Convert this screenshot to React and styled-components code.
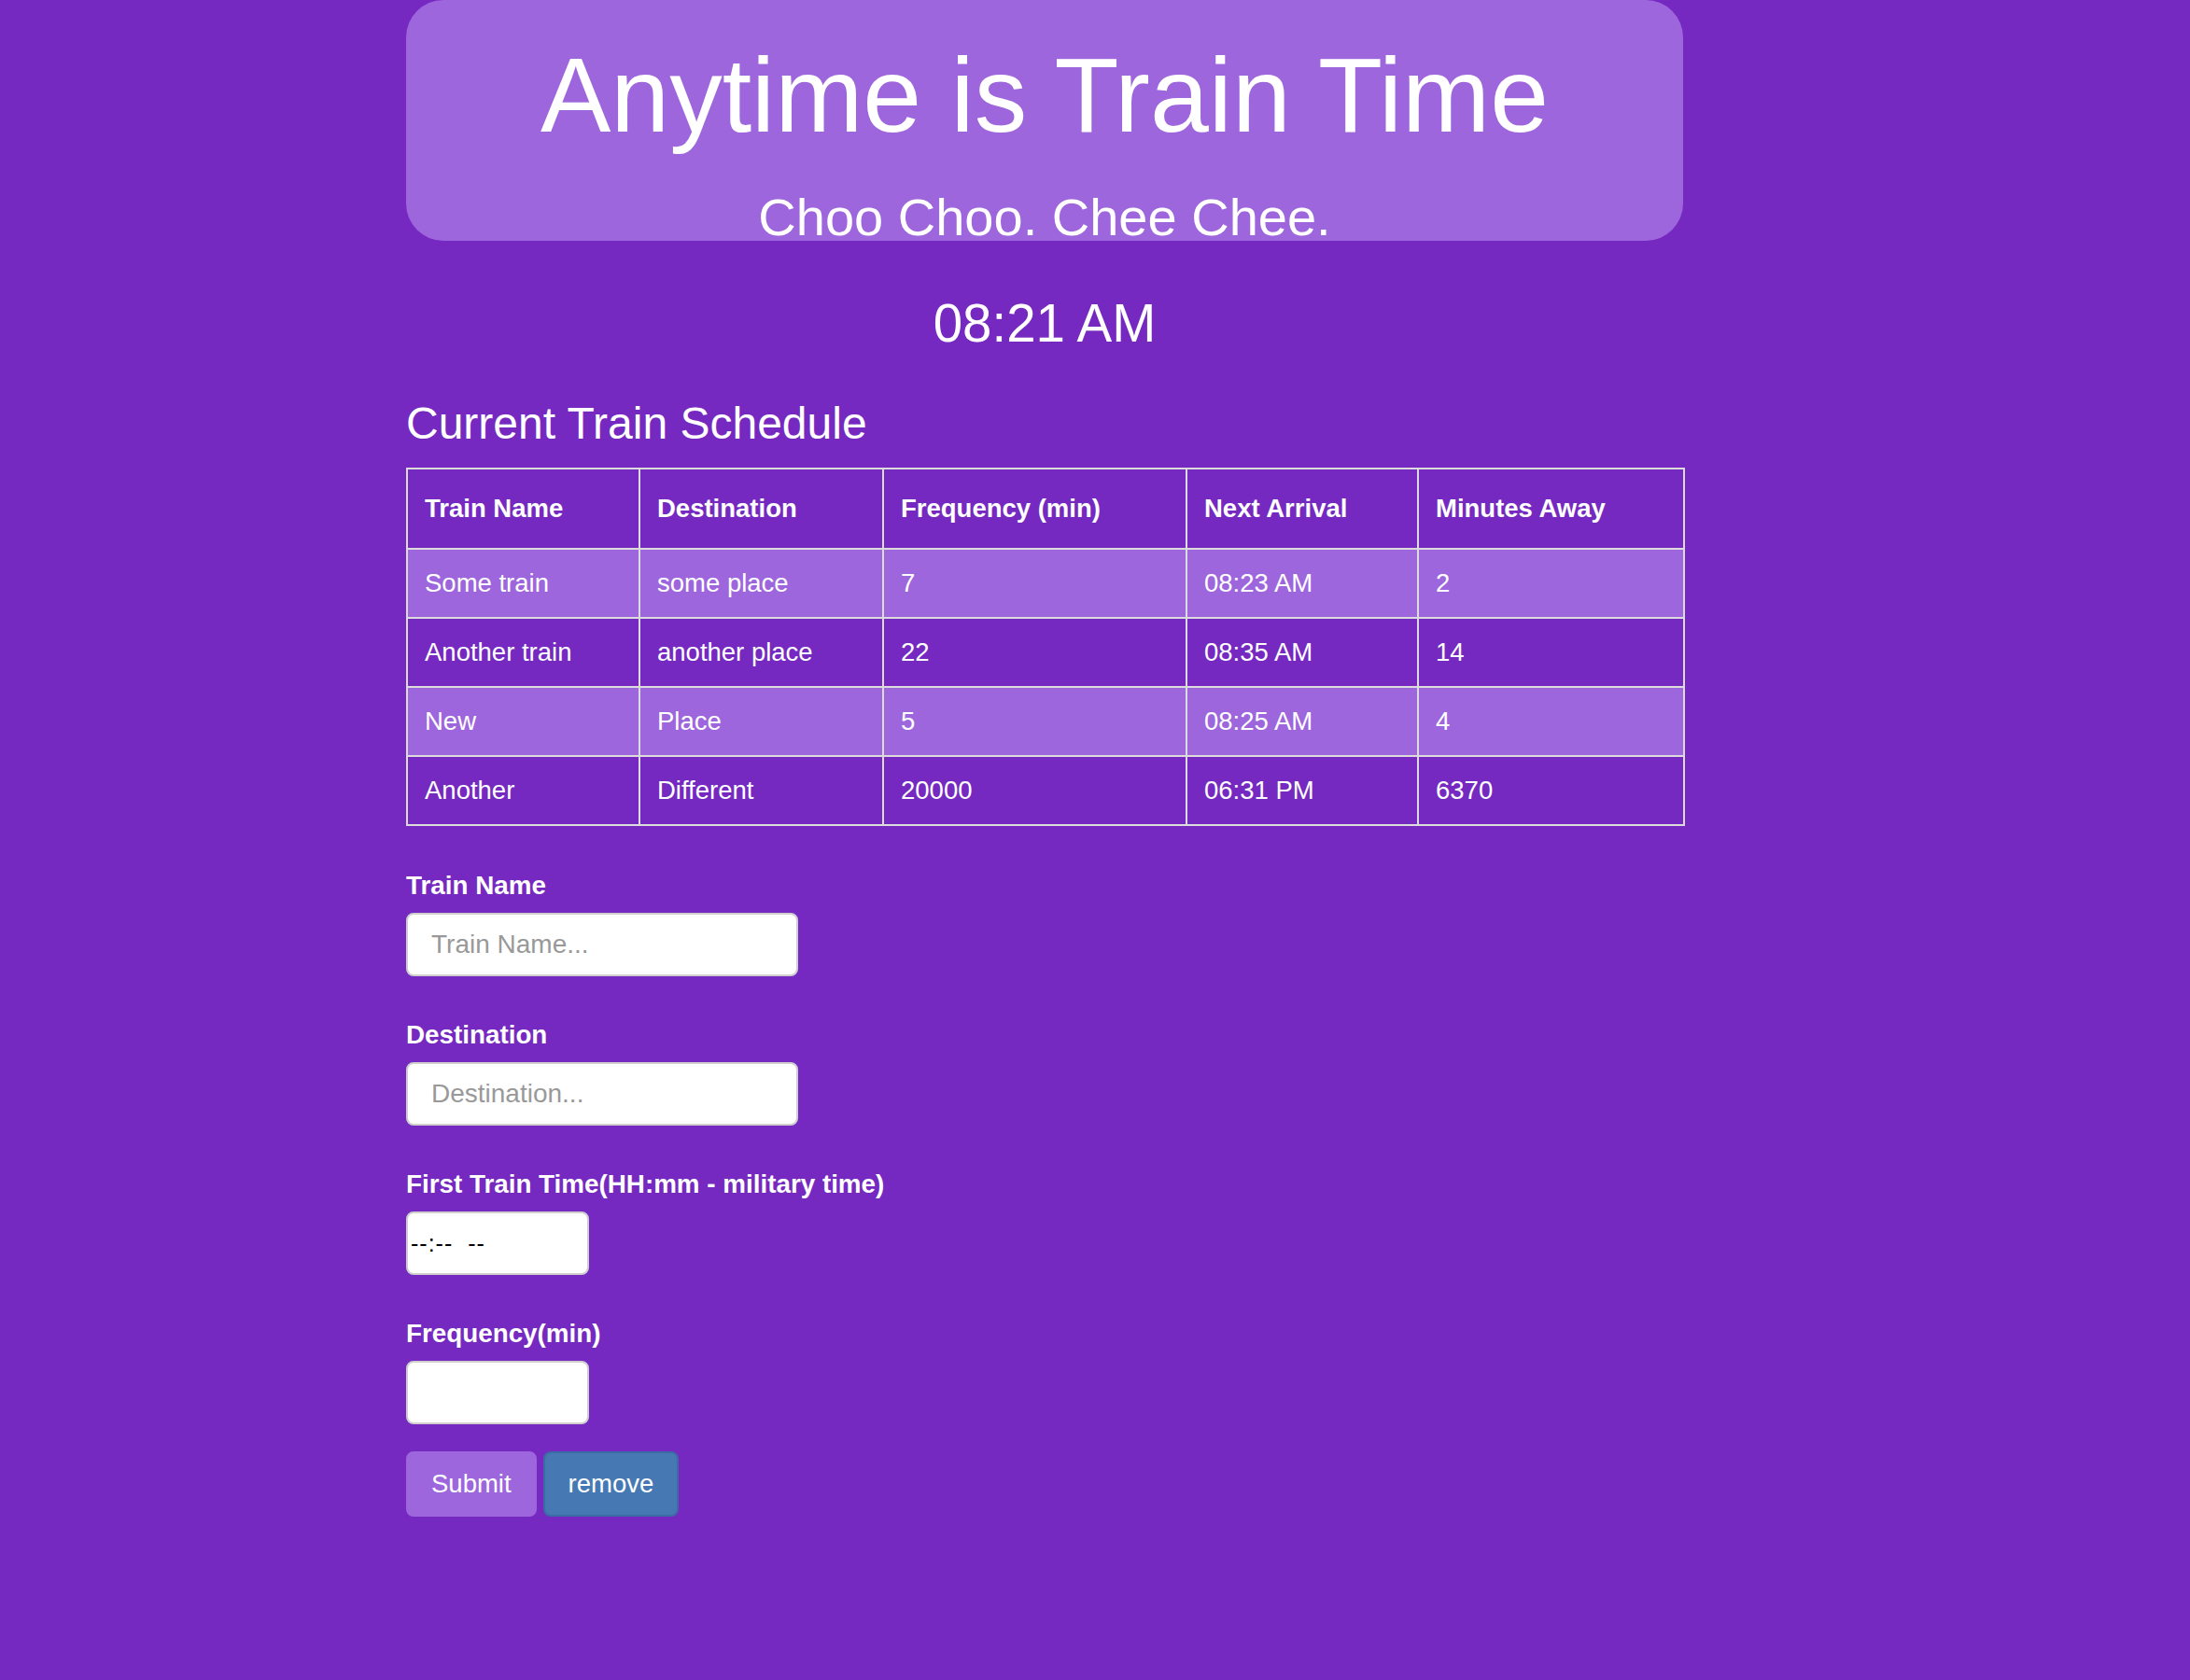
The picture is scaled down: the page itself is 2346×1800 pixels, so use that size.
import styled, { createGlobalStyle } from 'styled-components'

const GlobalStyle = createGlobalStyle`
    html, body {
        margin: 0;
        padding: 0;
        background: #7529c0;
        color: #fff;
        font-family: "Liberation Sans", Arial, Helvetica, sans-serif;
    }
`

const trains = [
    { name: 'Some train', destination: 'some place', frequency: '7', next: '08:23 AM', away: '2' },
    { name: 'Another train', destination: 'another place', frequency: '22', next: '08:35 AM', away: '14' },
    { name: 'New', destination: 'Place', frequency: '5', next: '08:25 AM', away: '4' },
    { name: 'Another', destination: 'Different', frequency: '20000', next: '06:31 PM', away: '6370' },
]

const columns = [
    { label: 'Train Name', width: 249 },
    { label: 'Destination', width: 261 },
    { label: 'Frequency (min)', width: 325 },
    { label: 'Next Arrival', width: 248 },
    { label: 'Minutes Away', width: 285 },
]

const App = () => {
    return (
        <>
            <GlobalStyle />
            <Page>
                <Jumbotron>
                    <Title>Anytime is Train Time</Title>
                    <Subtitle>Choo Choo. Chee Chee.</Subtitle>
                </Jumbotron>
                <Clock>08:21 AM</Clock>
                <SectionTitle>Current Train Schedule</SectionTitle>
                <Schedule>
                    <colgroup>
                        {columns.map((col) => (
                            <col key={col.label} style={{ width: col.width }} />
                        ))}
                    </colgroup>
                    <thead>
                        <tr>
                            {columns.map((col) => (
                                <HeadCell key={col.label}>{col.label}</HeadCell>
                            ))}
                        </tr>
                    </thead>
                    <tbody>
                        {trains.map((train, i) => (
                            <Row key={train.name + i} $striped={i % 2 === 0}>
                                <Cell>{train.name}</Cell>
                                <Cell>{train.destination}</Cell>
                                <Cell>{train.frequency}</Cell>
                                <Cell>{train.next}</Cell>
                                <Cell>{train.away}</Cell>
                            </Row>
                        ))}
                    </tbody>
                </Schedule>
                <Form onSubmit={(e) => e.preventDefault()}>
                    <Field>
                        <Label>Train Name</Label>
                        <Input type="text" placeholder="Train Name..." />
                    </Field>
                    <Field>
                        <Label>Destination</Label>
                        <Input type="text" placeholder="Destination..." />
                    </Field>
                    <Field>
                        <Label>First Train Time(HH:mm - military time)</Label>
                        <Input type="text" placeholder="--:-- --" $narrow $time />
                    </Field>
                    <Field>
                        <Label>Frequency(min)</Label>
                        <Input type="text" $narrow />
                    </Field>
                    <Buttons>
                        <Button type="submit">Submit</Button>
                        <Button type="button" $variant="remove">remove</Button>
                    </Buttons>
                </Form>
            </Page>
        </>
    )
}

const Page = styled.div`
    width: 1368px;
    margin-left: 435px;
    padding-bottom: 170px;
`
const Jumbotron = styled.header`
    height: 258px;
    box-sizing: border-box;
    padding-top: 46px;
    background: #9e66dc;
    border-radius: 40px;
    text-align: center;
`
const Title = styled.h1`
    margin: 0;
    font-size: 113px;
    line-height: 113px;
    font-weight: 400;
`
const Subtitle = styled.p`
    margin: 46px 0 0;
    font-size: 56px;
    line-height: 56px;
`
const Clock = styled.div`
    margin-top: 61px;
    font-size: 56.5px;
    line-height: 56px;
    text-align: center;
`
const SectionTitle = styled.h2`
    margin: 55px 0 0;
    font-size: 48px;
    line-height: 48px;
    font-weight: 400;
`
const Schedule = styled.table`
    margin-top: 23px;
    width: 100%;
    table-layout: fixed;
    border-collapse: collapse;
    border: 2px solid #dcdcdc;
    font-size: 27.5px;
`
const HeadCell = styled.th`
    height: 86px;
    padding: 0 18px;
    text-align: left;
    font-weight: 700;
    border: 2px solid #dcdcdc;
    box-sizing: border-box;
`
const Row = styled.tr`
    background: ${(p) => (p.$striped ? '#9e66dc' : 'transparent')};
`
const Cell = styled.td`
    height: 74px;
    padding: 0 18px;
    border: 2px solid #dcdcdc;
    box-sizing: border-box;
    white-space: nowrap;
`
const Form = styled.form`
    margin-top: 50px;
    display: flex;
    flex-direction: column;
    align-items: flex-start;
`
const Field = styled.div`
    display: flex;
    flex-direction: column;
    align-items: flex-start;
    margin-bottom: 49px;
    &:nth-last-child(2) {
        margin-bottom: 29px;
    }
`
const Label = styled.label`
    font-size: 27.8px;
    line-height: 27px;
    font-weight: 700;
    margin-bottom: 16px;
`
const Input = styled.input`
    box-sizing: border-box;
    width: ${(p) => (p.$narrow ? '196px' : '420px')};
    height: 68px;
    margin: 0;
    padding: ${(p) => (p.$time ? '0 3px' : '0 25px')};
    background: #fff;
    border: 2px solid #cfcfcf;
    border-radius: 8px;
    font-family: "Liberation Sans", Arial, sans-serif;
    font-size: ${(p) => (p.$time ? '25px' : '28px')};
    color: #000;
    outline: none;
    &::placeholder {
        color: ${(p) => (p.$time ? '#000' : '#999')};
        letter-spacing: ${(p) => (p.$time ? '1px' : 'normal')};
        word-spacing: ${(p) => (p.$time ? '8px' : 'normal')};
    }
`
const Buttons = styled.div`
    display: flex;
    gap: 7px;
`
const Button = styled.button`
    box-sizing: border-box;
    height: 70px;
    padding: 0 25px;
    border-radius: 8px;
    border: 2px solid ${(p) => (p.$variant === 'remove' ? '#3c6aa5' : '#9e66dc')};
    background: ${(p) => (p.$variant === 'remove' ? '#4679b3' : '#9e66dc')};
    color: #fff;
    font-family: "Liberation Sans", Arial, sans-serif;
    font-size: 27.5px;
    cursor: pointer;
`

export default App
